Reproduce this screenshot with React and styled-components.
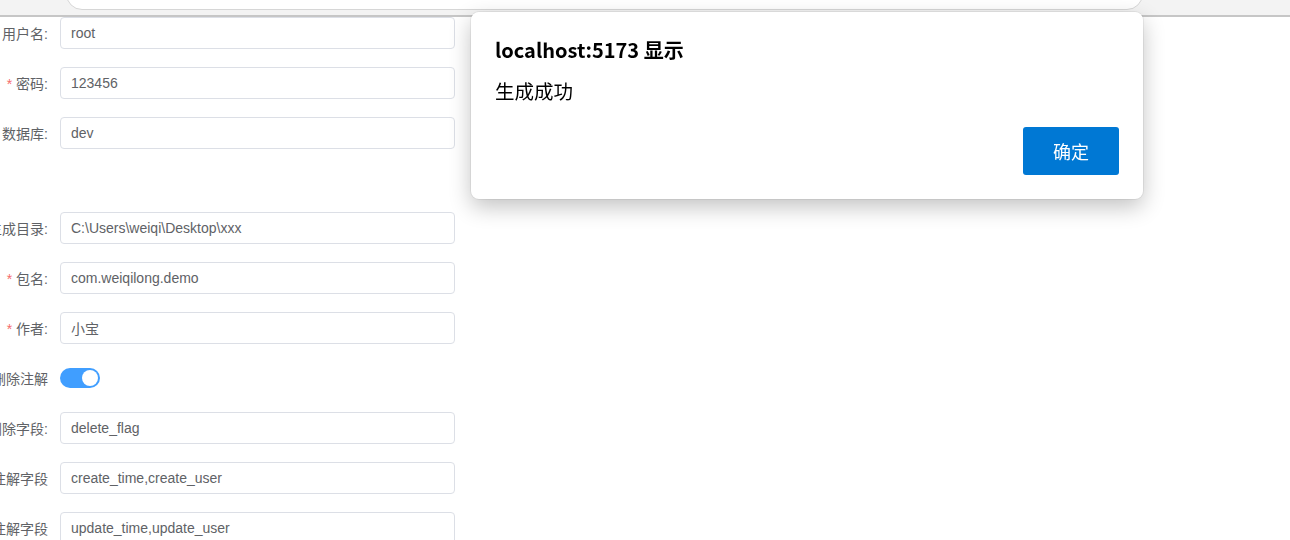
import React from "react";
import styled, { createGlobalStyle } from "styled-components";

const GlobalStyle = createGlobalStyle`
  html, body {
    margin: 0;
    padding: 0;
    background: #fff;
    overflow: hidden;
  }
  body {
    font-family: "Liberation Sans", "Noto Sans CJK SC", sans-serif;
  }
`;

const BrowserTop = styled.div`
  height: 15px;
  background: #f3f3f3;
  border-bottom: 2px solid #c6c6c6;
  overflow: hidden;
`;

const AddressBar = styled.div`
  margin: -22px 0 0 66px;
  width: 1075px;
  height: 30px;
  background: #fff;
  border: 1px solid #d6d6d6;
  border-radius: 16px;
`;

const Form = styled.form`
  display: flex;
  flex-direction: column;
  width: 455px;
`;

const Row = styled.div`
  display: flex;
  align-items: center;
  height: 32px;
  margin-bottom: 18px;
`;

const Spacer = styled.div`
  height: 45px;
`;

// labels are wider than the column in the screenshot, the left part gets clipped
const Label = styled.label`
  width: 60px;
  flex: none;
  display: flex;
  justify-content: flex-end;
  padding-right: 12px;
  box-sizing: border-box;
  overflow: hidden;
  white-space: nowrap;
  font-size: 14px;
  color: #606266;
  font-family: "Liberation Sans", "Noto Sans CJK SC", sans-serif;
`;

const Star = styled.span`
  color: #f56c6c;
  margin-right: 4px;
`;

const Input = styled.input`
  width: 395px;
  height: 32px;
  box-sizing: border-box;
  border: 1px solid #dcdfe6;
  border-radius: 4px;
  padding: 0 10px;
  font-size: 14px;
  color: #606266;
  font-family: "Liberation Sans", "Noto Sans CJK SC", sans-serif;
  outline: none;
  background: #fff;
`;

const Switch = styled.span`
  width: 40px;
  height: 20px;
  border-radius: 10px;
  background: ${p => (p.on ? "#409eff" : "#dcdfe6")};
  display: flex;
  align-items: center;
  justify-content: ${p => (p.on ? "flex-end" : "flex-start")};
  padding: 0 2px;
  box-sizing: border-box;
`;

const Knob = styled.span`
  width: 16px;
  height: 16px;
  border-radius: 50%;
  background: #fff;
`;

const Dialog = styled.div`
  position: fixed;
  left: 471px;
  top: 12px;
  width: 672px;
  height: 187px;
  box-sizing: border-box;
  background: #fff;
  border-radius: 8px;
  box-shadow: 0 0 0 1px rgba(0, 0, 0, 0.06), 0 8px 22px rgba(0, 0, 0, 0.24);
  padding: 24px 24px 24px 24px;
  display: flex;
  flex-direction: column;
  font-family: "Noto Sans CJK SC", "Liberation Sans", sans-serif;
  color: #000;
`;

const DialogTitle = styled.div`
  font-size: 20px;
  font-weight: 700;
  line-height: 28px;
`;

const DialogMessage = styled.div`
  font-size: 19.5px;
  line-height: 28px;
  margin-top: 13px;
`;

const DialogActions = styled.div`
  display: flex;
  justify-content: flex-end;
  margin-top: 22px;
`;

const OkButton = styled.button`
  width: 96px;
  height: 48px;
  border: none;
  border-radius: 3px;
  background: #0078d4;
  color: #fff;
  font-size: 18px;
  font-family: "Noto Sans CJK SC", sans-serif;
`;

const fields = [
  { label: "用户名:", value: "root" },
  { label: "密码:", value: "123456", required: true },
  { label: "数据库:", value: "dev" },
  { spacer: true },
  { label: "生成目录:", value: "C:\\Users\\weiqi\\Desktop\\xxx" },
  { label: "包名:", value: "com.weiqilong.demo", required: true },
  { label: "作者:", value: "小宝", required: true },
  { label: "删除注解", toggle: true },
  { label: "删除字段:", value: "delete_flag" },
  { label: "创建注解字段", value: "create_time,create_user" },
  { label: "更新注解字段", value: "update_time,update_user" },
];

export default function App() {
  return (
    <>
      <GlobalStyle />
      <BrowserTop>
        <AddressBar />
      </BrowserTop>
      <Form>
        {fields.map((f, i) =>
          f.spacer ? (
            <Spacer key={i} />
          ) : (
            <Row key={i}>
              <Label>
                <span>
                  {f.required && <Star>*</Star>}
                  {f.label}
                </span>
              </Label>
              {f.toggle ? (
                <Switch on>
                  <Knob />
                </Switch>
              ) : (
                <Input defaultValue={f.value} />
              )}
            </Row>
          )
        )}
      </Form>
      <Dialog>
        <DialogTitle>localhost:5173 显示</DialogTitle>
        <DialogMessage>生成成功</DialogMessage>
        <DialogActions>
          <OkButton>确定</OkButton>
        </DialogActions>
      </Dialog>
    </>
  );
}
